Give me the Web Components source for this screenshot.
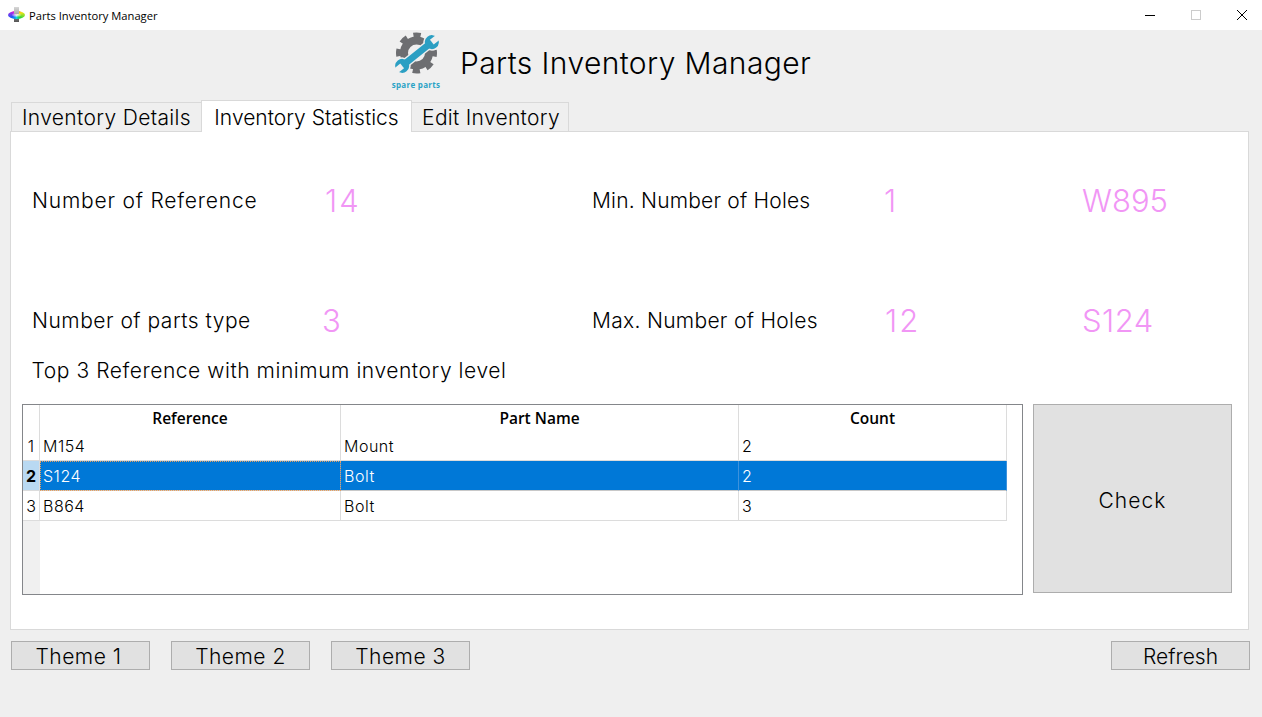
<!DOCTYPE html>
<html lang="en">
<head>
<meta charset="UTF-8">
<title>Parts Inventory Manager</title>
<style>
  html, body { margin: 0; height: 100%; }
  body { width: 1262px; height: 717px; overflow: hidden; background: #efefef; color: #000;
         font-family: "Inter", "Liberation Sans", sans-serif; font-weight: 300; }
</style>
</head>
<body>
  <win-titlebar>Parts Inventory Manager</win-titlebar>
  <app-header>Parts Inventory Manager</app-header>
  <tab-strip></tab-strip>
  <stats-pane></stats-pane>
  <theme-bar></theme-bar>

<script>
  class WinTitlebar extends HTMLElement {
    connectedCallback() {
      this.attachShadow({mode: 'open'}).innerHTML = `
      <style>
        :host { display: flex; align-items: center; height: 30px; background: #fff; padding-left: 8px; overflow: hidden; }
        .icon { position: relative; width: 17px; height: 16px; }
        .stem { position: absolute; left: 6px; top: 0; width: 5px; height: 15px; background: linear-gradient(#d0d0d0, #8f8f8f 50%, #555); }
        .disc { position: absolute; left: 0; top: 4px; width: 17px; height: 8px; border-radius: 50%;
                background: radial-gradient(closest-side, #fff 0, rgba(255,255,255,0) 60%),
                            conic-gradient(#ff1a4a, #f2e21a 18%, #20d83a 35%, #10d8e8 50%, #1a5cf5 68%, #c820e8 85%, #ff1a4a); }
        .stem.top { height: 7px; background: linear-gradient(#d8d8d8, #a8a8a8); }
        .name { margin-left: 4px; font: 400 11.200px "Open Sans", "Liberation Sans", sans-serif; color: #000; flex: 1; }
        .btns { display: flex; margin-right: -3px; }
        .btns span { width: 46px; height: 30px; display: flex; align-items: center; justify-content: center; }
      </style>
      <div class="icon"><div class="stem"></div><div class="disc"></div><div class="stem top"></div></div>
      <span class="name"><slot></slot></span>
      <div class="btns">
        <span><svg width="10" height="10"><path d="M0 5.500H10" stroke="#000"/></svg></span>
        <span><svg width="10" height="10"><rect x=".5" y=".5" width="9" height="9" fill="none" stroke="#ccc"/></svg></span>
        <span><svg width="12" height="12"><path d="M1 1L11 11M11 1L1 11" stroke="#000"/></svg></span>
      </div>`;
    }
  }
  customElements.define('win-titlebar', WinTitlebar);

  class AppHeader extends HTMLElement {
    connectedCallback() {
      this.attachShadow({mode: 'open'}).innerHTML = `
      <style>
        :host { display: flex; align-items: flex-start; height: 70px; padding-left: 390px; }
        .logo { width: 52px; display: flex; flex-direction: column; align-items: center; padding-top: 2px; }
        .logo svg { display: block; }
        .logo b { font: 700 8px/10px "Open Sans", sans-serif; color: #2ba3c6; margin-top: 6px; letter-spacing: .3px; white-space: nowrap; }
        h1 { margin: 13px 0 0 18px; font: 300 30px/40px "Inter", sans-serif; color: #000; letter-spacing: .4px; }
      </style>
      <div class="logo">
        <svg width="48" height="42" viewBox="0 0 48 42">
          <g fill="none" stroke="#6d6e71">
            <circle cx="24.500" cy="21" r="12.500" stroke-width="8"/>
            <circle cx="24.500" cy="21" r="18" stroke-width="5" stroke-dasharray="7.400 6.737" stroke-dashoffset="3.700"/>
          </g>
          <g transform="translate(25 22) rotate(-38.700)">
            <path d="M-19 0H19" stroke="#efefef" stroke-width="9.500"/>
            <circle cx="19" r="8.500" fill="#efefef"/>
            <circle cx="-19" r="8.500" fill="#efefef"/>
            <path d="M-19 0H19" stroke="#2b9fc3" stroke-width="6.500"/>
            <circle cx="19" r="7" fill="#2b9fc3"/>
            <circle cx="-19" r="7" fill="#2b9fc3"/>
            <rect x="19" y="-3" width="9" height="6" fill="#efefef"/>
            <rect x="-28" y="-3" width="9" height="6" fill="#efefef"/>
          </g>
        </svg>
        <b>spare parts</b>
      </div>
      <h1><slot></slot></h1>`;
    }
  }
  customElements.define('app-header', AppHeader);

  class TabStrip extends HTMLElement {
    connectedCallback() {
      this.attachShadow({mode: 'open'}).innerHTML = `
      <style>
        :host { display: flex; align-items: flex-end; height: 31px; padding-left: 12px; position: relative; z-index: 1; }
        div { box-sizing: border-box; height: 29px; border: 1px solid #d9d9d9; border-bottom: 0; margin-left: -1px;
              font-size: 21px; line-height: 29px; text-align: center; color: #000; }
        .on { height: 32px; line-height: 33px; background: #fff; margin-bottom: -1px; position: relative; }
      </style>
      <div style="width:191px;letter-spacing:.35px">Inventory Details</div>
      <div class="on" style="width:211px">Inventory Statistics</div>
      <div style="width:158px;letter-spacing:.3px;padding-left:2px">Edit Inventory</div>`;
    }
  }
  customElements.define('tab-strip', TabStrip);

  class StatItem extends HTMLElement {
    connectedCallback() {
      this.attachShadow({mode: 'open'}).innerHTML = `
      <style>
        :host { display: flex; align-items: center; box-sizing: border-box; height: 40px; padding-top: 2px; font-size: 21px; color: #000; }
        :host([value]) { padding-top: 3px; font-size: 31px; color: #f196f5; font-weight: 300; }
      </style><slot></slot>`;
    }
  }
  customElements.define('stat-item', StatItem);

  class PartsTable extends HTMLElement {
    connectedCallback() {
      const rows = [['1','M154','Mount','2'],['2','S124','Bolt','2'],['3','B864','Bolt','3']];
      let html = rows.map(r => `
        <div class="row ${r[0]=='2' ? 'sel' : ''}">
          <div class="rh">${r[0]}</div><div class="c first">${r[1]}</div><div class="c">${r[2]}</div><div class="c">${r[3]}</div>
        </div>`).join('');
      this.attachShadow({mode: 'open'}).innerHTML = `
      <style>
        :host { display: block; box-sizing: border-box; border: 1px solid #84868a; background: #fff; height: 191px; position: relative;
                font-size: 16px; letter-spacing: .5px; color: #000; }
        .gutter { position: absolute; left: 0; top: 116px; bottom: 0; width: 17px; background: #f0f0f0; }
        .row { display: grid; grid-template-columns: 17px 301px 398px 268px; grid-template-rows: 30px; width: 984px; box-sizing: border-box; height: 30px; }
        .head { height: 27px; grid-template-rows: 27px; font: 600 15.500px/27px "Open Sans", sans-serif; letter-spacing: 0; text-align: center; color: #000; }
        .row > div { box-sizing: border-box; border-right: 1px solid #dcdcdc; border-bottom: 1px solid #dcdcdc; }
        .head > div { border-bottom: 0; }
        .rh { text-align: center; line-height: 29px; padding-top: 1px; letter-spacing: 0; }
        .c { padding: 1px 0 0 3px; line-height: 29px; }
        .row.r1 { height: 29px; grid-template-rows: 29px; }
        .row.r1 .rh, .row.r1 .c { padding-top: 0; line-height: 28px; }
        .sel .c { background: #0078d7; color: #fff; border-color: #0078d7; border-right-color: #3d92dc; border-bottom-color: #c8c8c8; }
        .sel .rh { background: #b9d9f2; font-weight: 700; }
        .sel .first { outline: 1px dotted #e8a060; outline-offset: -1px; }
      </style>
      <div class="gutter"></div>
      <div class="row head"><div></div><div>Reference</div><div>Part Name</div><div>Count</div></div>
      ${html}`;
      this.shadowRoot.querySelector('.row:not(.head)').classList.add('r1');
    }
  }
  customElements.define('parts-table', PartsTable);

  class FlatButton extends HTMLElement {
    connectedCallback() {
      this.attachShadow({mode: 'open'}).innerHTML = `
      <style>
        :host { display: flex; align-items: center; justify-content: center; box-sizing: border-box; padding-top: 2px;
                background: #e1e1e1; border: 1px solid #adadad; font-size: 21px; color: #000; cursor: default; }
      </style><slot></slot>`;
    }
  }
  customElements.define('flat-button', FlatButton);

  class StatsPane extends HTMLElement {
    connectedCallback() {
      this.attachShadow({mode: 'open'}).innerHTML = `
      <style>
        :host { display: block; box-sizing: border-box; width: 1239px; height: 499px; margin-left: 10px;
                background: #fff; border: 1px solid #d9d9d9; padding: 47px 16px 0 11px; }
        .grid { display: grid; grid-template-columns: 290px 270px 292px 198px auto; row-gap: 80px; padding-left: 10px; }
        .cap { margin: 10px 0 0 9.500px; height: 40px; padding-top: 2px; box-sizing: border-box; display: flex; align-items: center; font-size: 21px; letter-spacing: .55px; color: #000; }
        .bottom { display: flex; gap: 10px; margin-top: 14px; }
        parts-table { width: 1001px; margin-top: 1px; }
        flat-button { width: 199px; height: 189px; margin-top: 1px; padding-top: 4px; letter-spacing: 1.100px; }
      </style>
      <div class="grid">
        <stat-item style="letter-spacing:.8px">Number of Reference</stat-item><stat-item value style="letter-spacing:2px;margin-left:3px">14</stat-item>
        <stat-item style="letter-spacing:.2px">Min. Number of Holes</stat-item><stat-item value>1</stat-item><stat-item value>W895</stat-item>
        <stat-item style="letter-spacing:.5px">Number of parts type</stat-item><stat-item value>3</stat-item>
        <stat-item style="letter-spacing:.3px">Max. Number of Holes</stat-item><stat-item value style="letter-spacing:2px;margin-left:1px">12</stat-item><stat-item value style="letter-spacing:.5px">S124</stat-item>
      </div>
      <div class="cap">Top 3 Reference with minimum inventory level</div>
      <div class="bottom">
        <parts-table></parts-table>
        <flat-button>Check</flat-button>
      </div>`;
    }
  }
  customElements.define('stats-pane', StatsPane);

  class ThemeBar extends HTMLElement {
    connectedCallback() {
      this.attachShadow({mode: 'open'}).innerHTML = `
      <style>
        :host { display: flex; gap: 21px; padding: 11px 12px 0 11px; }
        flat-button { width: 139px; height: 29px; letter-spacing: .5px; }
        .first { padding-right: 4px; }
        .end { margin-left: auto; letter-spacing: 0; }
      </style>
      <flat-button class="first">Theme 1</flat-button><flat-button>Theme 2</flat-button><flat-button>Theme 3</flat-button>
      <flat-button class="end">Refresh</flat-button>`;
    }
  }
  customElements.define('theme-bar', ThemeBar);
</script>
</body>
</html>
